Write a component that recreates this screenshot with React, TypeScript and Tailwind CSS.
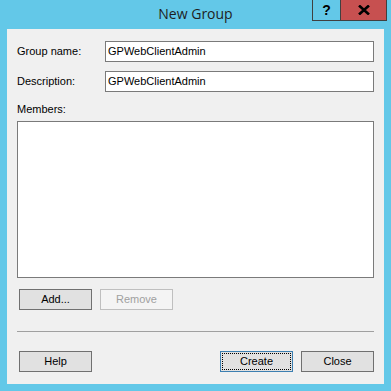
import React from 'react';

const font = { fontFamily: '"Liberation Sans", Arial, sans-serif' };

type BtnProps = {
  label: string;
  disabled?: boolean;
  focused?: boolean;
};

const DlgButton = ({ label, disabled, focused }: BtnProps) => {
  if (disabled) {
    return (
      <div className="w-[73px] h-[21px] border border-[#bfbfbf] bg-[#f4f4f4] flex items-center justify-center text-[11px] text-[#a0a0a0]">
        {label}
      </div>
    );
  }
  return (
    <div
      className={`w-[73px] h-[21px] border bg-[#e1e1e1] flex items-center justify-center text-[11px] text-black ${
        focused ? 'border-[#3c7fb1] p-[1px]' : 'border-[#707070]'
      }`}
    >
      {focused ? (
        <div className="w-full h-full border border-dotted border-black flex items-center justify-center">{label}</div>
      ) : (
        label
      )}
    </div>
  );
};

const FieldRow = ({ label, value, className = '' }: { label: string; value: string; className?: string }) => (
  <div className={`flex items-center h-[21px] ${className}`}>
    <span className="w-[88px] text-[11px] text-black">{label}</span>
    <div className="flex-1 h-[21px] border border-[#7a7a7a] bg-white flex items-center pl-[2px] text-[11px] text-black">
      {value}
    </div>
  </div>
);

export default function App() {
  return (
    <div className="w-[391px] h-[391px] bg-[#63c8e8] flex flex-col" style={font}>
      {/* Title bar */}
      <div className="relative h-[29px] flex-shrink-0">
        <div
          className="absolute left-0 right-0 top-[5px] text-center text-[14px] leading-[18px] text-[#1e1e1e]"
          style={{ fontFamily: '"Open Sans", "Noto Sans", sans-serif' }}
        >
          New Group
        </div>
        <div className="absolute top-0 left-[312px] flex h-[21px] border border-t-0 border-[#404040]">
          <div className="w-[27px] h-full flex items-center justify-center text-[14px] font-bold text-black">?</div>
          <div className="w-[46px] h-full bg-[#c75050] border-l border-[#404040] flex items-center justify-center">
            <svg width="12" height="10" viewBox="0 0 12 10">
              <path d="M1 0.5 L11 9.5 M11 0.5 L1 9.5" stroke="#000" strokeWidth="2.6" />
            </svg>
          </div>
        </div>
      </div>

      {/* Client area */}
      <div className="flex-1 mx-[7px] mb-[7px] bg-[#f0f0f0] pt-[12px] px-[10px] flex flex-col">
        <FieldRow label="Group name:" value="GPWebClientAdmin" />
        <FieldRow label="Description:" value="GPWebClientAdmin" className="mt-[9px]" />

        <div className="mt-[11px] h-[13px] leading-[13px] text-[11px] text-black">Members:</div>
        <div className="mt-[5px] h-[157px] border border-[#7a7a7a] bg-white" />

        <div className="mt-[11px] ml-[2px] flex gap-[8px]">
          <DlgButton label="Add..." />
          <DlgButton label="Remove" disabled />
        </div>

        <div className="mt-[21px] h-px bg-[#a0a0a0]" />

        <div className="mt-[19px] ml-[2px] flex items-center">
          <DlgButton label="Help" />
          <div className="flex-1" />
          <div className="flex gap-[8px]">
            <DlgButton label="Create" focused />
            <DlgButton label="Close" />
          </div>
        </div>
      </div>
    </div>
  );
}
